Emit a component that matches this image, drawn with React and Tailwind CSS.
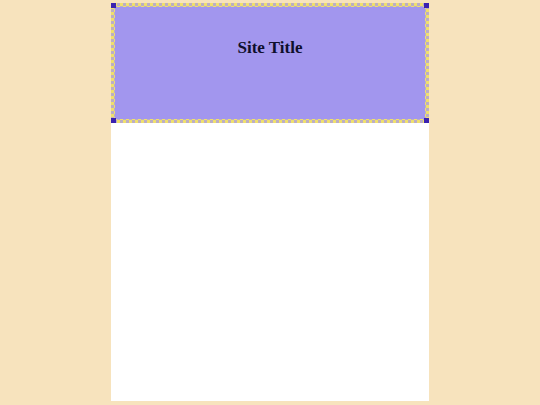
import React from 'react';

const Corner = ({ pos }) => (
    <span className={`absolute w-[5px] h-[5px] bg-[#3a22b0] ${pos}`} />
);

export default function App() {
    return (
        <div className="min-h-[405px] bg-[#f7e3bd] pt-[3px]" style={{ fontFamily: '"Liberation Serif", serif' }}>
            <div className="w-[318px] h-[398px] mx-auto bg-white">
                {/* dotted frame drawn as a checker pattern behind the inner panel */}
                <header className="relative h-[120px] p-[4px] bg-[repeating-conic-gradient(#f0e06c_0_25%,#bcaec4_0_50%)] bg-[length:6px_6px]">
                    <div className="h-full bg-[#a296ee] flex justify-center pt-[32px]">
                        <h1 className="text-[17px] font-bold text-[#0f0f2c] leading-none">Site Title</h1>
                    </div>
                    <Corner pos="top-0 left-0" />
                    <Corner pos="top-0 right-0" />
                    <Corner pos="bottom-0 left-0" />
                    <Corner pos="bottom-0 right-0" />
                </header>
            </div>
        </div>
    );
}
